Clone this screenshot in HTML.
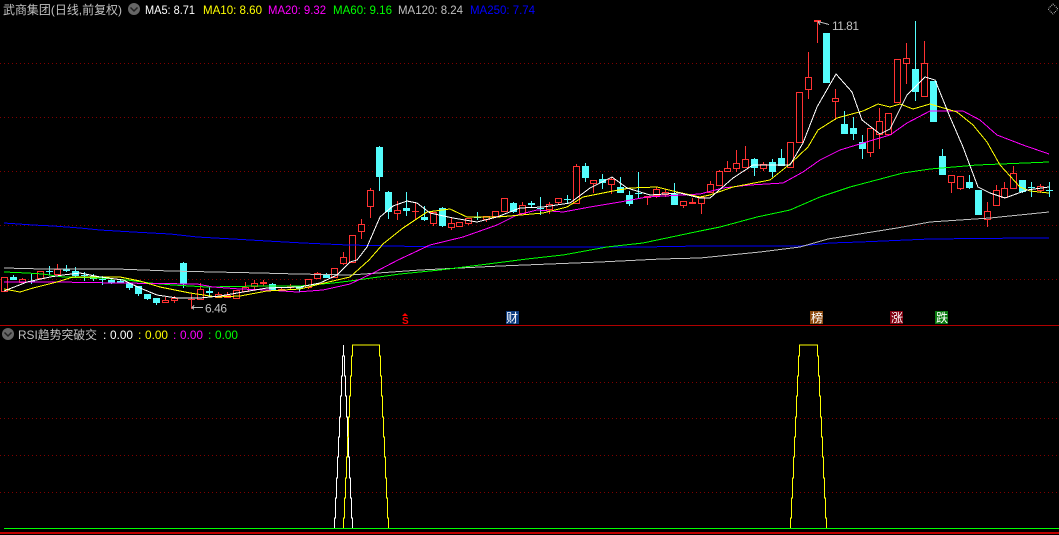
<!DOCTYPE html>
<html><head><meta charset="utf-8"><title>武商集团</title>
<style>
html,body{margin:0;padding:0;background:#000;width:1059px;height:535px;overflow:hidden}
svg{display:block;position:absolute;left:0;top:0}
text{font-family:"Liberation Sans","WenQuanYi Zen Hei","Noto Sans CJK SC",sans-serif;font-size:12px}
</style></head><body>
<svg width="1059" height="535" viewBox="0 0 1059 535" xmlns="http://www.w3.org/2000/svg">
<defs><pattern id="dots" x="0" y="0" width="4" height="1" patternUnits="userSpaceOnUse"><rect width="1" height="1" fill="#800000"/></pattern></defs>
<rect width="1059" height="535" fill="#000"/>
<g shape-rendering="crispEdges" fill="none">
<g fill="url(#dots)"><rect x="0" y="63" width="1059" height="1"/><rect x="0" y="117" width="1059" height="1"/><rect x="0" y="171" width="1059" height="1"/><rect x="0" y="225" width="1059" height="1"/><rect x="0" y="279" width="1059" height="1"/><rect x="0" y="382" width="1059" height="1"/><rect x="0" y="418" width="1059" height="1"/><rect x="0" y="455" width="1059" height="1"/><rect x="0" y="492" width="1059" height="1"/></g>
<path stroke="#b00000" d="M0 325.5H1059"/>
<rect x="0" y="532" width="1059" height="2" fill="#c00000"/>

<!-- cyan wicks -->
<path stroke="#54fcfc" d="M13.5 275V277M31.5 274V284M46 271.5h7M49.5 266V275M66.5 265V272M75.5 267V277M81 275.5h7M84.5 272V281M93.5 274V281M99 279.5h7M102.5 276V285M111.5 278V284M120.5 280V283M129.5 283V290M138.5 286V296M147.5 294V300M156.5 298V305M183.5 262V288M209.5 287V296M272.5 283V291M299.5 286V292M326.5 273V278M379.5 146V191M388.5 191V219M406.5 192V216M424.5 206V221M442.5 207V227M477.5 212V220M513.5 202V213M531.5 201V208M537 208.5h7M540.5 197V215M564 199.5h7M567.5 195V204M585.5 163V182M602.5 174V189M620.5 177V193M629.5 191V206M638.5 172V198M674.5 183V205M754.5 158V176M772.5 159V177M781.5 149V166M844.5 111V134M853.5 117V140M862.5 135V159M915.5 21V101M942.5 149V175M969.5 175V189M1022.5 180V193M1028 187.5h7M1031.5 182V197M1046 190.5h7M1049.5 182V197"/>
<!-- cyan bodies -->
<path fill="#54fcfc" d="M10 277h7v3h-7zM28 281h7v1h-7zM63 269h7v2h-7zM72 271h7v5h-7zM90 276h7v3h-7zM108 280h7v3h-7zM117 281h7v2h-7zM126 283h7v5h-7zM135 286h7v8h-7zM144 294h7v5h-7zM153 298h7v5h-7zM180 263h7v21h-7zM206 291h7v2h-7zM269 284h7v7h-7zM296 286h7v3h-7zM323 275h7v3h-7zM376 147h7v30h-7zM385 192h7v20h-7zM403 208h7v3h-7zM421 217h7v3h-7zM439 208h7v18h-7zM474 217h7v1h-7zM510 203h7v9h-7zM528 203h7v2h-7zM582 166h7v12h-7zM599 179h7v4h-7zM617 187h7v6h-7zM626 195h7v9h-7zM635 193h7v1h-7zM671 194h7v11h-7zM751 159h7v9h-7zM769 162h7v10h-7zM778 158h7v8h-7zM823 33h7v50h-7zM841 124h7v10h-7zM850 128h7v6h-7zM859 142h7v7h-7zM912 69h7v23h-7zM930 81h7v41h-7zM939 156h7v19h-7zM966 182h7v6h-7zM975 190h7v25h-7zM1019 180h7v12h-7z"/>

<!-- red wicks -->
<path stroke="#ff3232" d="M22.5 278V283M57.5 264V269M165.5 297V300M174.5 296V303M188 299.5h7M191.5 294V309M200.5 283V289M218.5 292V298M227.5 292V298M245.5 282V287M254.5 280V291M263.5 280V286M281.5 287V291M290.5 284V289M308.5 287V289M317.5 272V273M343.5 252V265M361.5 219V239M370.5 188V218M397.5 201V220M412 211.5h7M415.5 202V220M433.5 223V226M451.5 218V230M459.5 222V227M468.5 218V225M486.5 216V222M522.5 202V214M549.5 202V214M558.5 198V204M576.5 164V166M593.5 183V193M611.5 177V194M647.5 196V205M656.5 187V198M665.5 189V197M683.5 201V208M692.5 198V204M701.5 196V214M710.5 181V192M719.5 170V171M727.5 161V172M736.5 150V172M745.5 146V159M763.5 162V171M808.5 52V99M814 20.5h7M814 21.5h7M817.5 20V43M835.5 89V120M870.5 152V157M879.5 108V149M906.5 43V84M924.5 41V63M951.5 182V193M960.5 188V190M987.5 202V227M996.5 185V190M1004.5 182V198M1013.5 166V173M1040.5 184V193"/>
<!-- red bodies -->
<path stroke="#ff3232" fill="#000" d="M1.5 277.5h6v14h-6zM19.5 279.5h6v3h-6zM37.5 271.5h6v7h-6zM54.5 269.5h6v5h-6zM162.5 300.5h6v2h-6zM171.5 298.5h6v2h-6zM197.5 289.5h6v10h-6zM215.5 294.5h6v3h-6zM224.5 295.5h6v2h-6zM233.5 290.5h6v8h-6zM242.5 287.5h6v4h-6zM251.5 283.5h6v3h-6zM260.5 282.5h6v1h-6zM278.5 289.5h6v1h-6zM287.5 286.5h6v1h-6zM305.5 279.5h6v8h-6zM314.5 273.5h6v5h-6zM331.5 268.5h6v9h-6zM340.5 257.5h6v6h-6zM349.5 235.5h6v27h-6zM358.5 224.5h6v7h-6zM367.5 190.5h6v16h-6zM394.5 210.5h6v3h-6zM430.5 212.5h6v11h-6zM448.5 223.5h6v4h-6zM456.5 222.5h6v4h-6zM465.5 218.5h6v5h-6zM483.5 216.5h6v3h-6zM492.5 211.5h6v5h-6zM501.5 198.5h6v13h-6zM519.5 205.5h6v8h-6zM546.5 204.5h6v5h-6zM555.5 198.5h6v4h-6zM573.5 166.5h6v37h-6zM590.5 180.5h6v3h-6zM608.5 179.5h6v5h-6zM644.5 196.5h6v1h-6zM653.5 189.5h6v6h-6zM662.5 192.5h6v2h-6zM680.5 201.5h6v4h-6zM689.5 202.5h6v1h-6zM698.5 197.5h6v6h-6zM707.5 184.5h6v8h-6zM716.5 171.5h6v14h-6zM724.5 168.5h6v3h-6zM733.5 163.5h6v5h-6zM742.5 159.5h6v8h-6zM760.5 164.5h6v4h-6zM787.5 142.5h6v25h-6zM796.5 92.5h6v50h-6zM805.5 77.5h6v12h-6zM832.5 98.5h6v3h-6zM867.5 128.5h6v24h-6zM876.5 121.5h6v13h-6zM885.5 113.5h6v21h-6zM894.5 59.5h6v43h-6zM903.5 58.5h6v5h-6zM921.5 63.5h6v33h-6zM948.5 175.5h6v7h-6zM957.5 176.5h6v12h-6zM984.5 211.5h6v8h-6zM993.5 190.5h6v15h-6zM1001.5 188.5h6v9h-6zM1010.5 173.5h6v15h-6zM1037.5 186.5h6v4h-6z"/>

<!-- MA250 -->
<polyline stroke="#0000ff" points="4,223 33,225 53,226 80,228 100,230 133,232 170,234 197,237 233,239 267,241 303,243 348,245 438,247 607,247 643,247 700,246 800,246 830,243 860,242 930,239 1027,238 1049,238"/>
<!-- MA120 -->
<polyline stroke="#c0c0c0" points="4,268 43,269 117,269 170,271 260,273 297,274 350,275 420,270 500,266 600,262 661,259 700,258 760,252 800,247 828,239 897,228 930,222 990,218 1049,212"/>
<!-- MA60 -->
<polyline stroke="#00ff00" points="4,272 27,273 43,274 63,277 100,278 127,280 150,283 173,285 207,287 260,286 300,286 333,283 350,281 400,274 440,270 480,265 527,259 563,255 607,247 643,243 700,231 720,227 757,217 790,210 820,197 850,187 903,173 930,169 977,165 1049,162"/>
<!-- MA20 -->
<polyline stroke="#ff00ff" points="4,282 57,282 117,283 197,284 213,287 240,289 267,290 297,292 323,290 350,284 375,272 398,260 430,245 463,237 497,225 517,215 537,210 563,212 590,207 620,202 647,197 700,194 723,188 750,185 783,183 803,172 820,160 840,150 863,143 890,135 907,123 930,111 963,111 980,120 997,135 1023,145 1049,154"/>
<!-- MA10 -->
<polyline stroke="#ffff00" points="4,289 20,292 33,288 57,282 73,277 120,277 140,281 160,287 190,293 217,297 240,296 267,291 300,289 320,284 350,277 369,260 383,244 403,228 427,212 450,209 467,217 497,217 510,216 543,213 567,207 583,197 613,191 630,188 657,187 677,192 700,197 710,195 733,187 770,180 790,164 808,147 818,130 837,118 863,111 878,104 890,107 900,104 913,109 930,104 957,112 973,125 987,142 1000,165 1020,187 1030,191 1049,193"/>
<!-- MA5 -->
<polyline stroke="#ffffff" points="4,291 27,282 50,277 63,275 80,273 100,277 123,280 140,288 157,295 177,298 200,298 220,296 243,292 267,288 300,287 320,283 337,275 350,262 357,260 367,247 380,217 393,206 407,201 417,203 430,213 453,218 477,222 497,217 520,208 543,207 570,203 590,188 612,177 627,188 650,195 680,193 700,198 710,198 733,178 753,165 790,165 803,143 817,107 836,74 852,92 862,120 880,134 890,129 907,95 925,77 935,80 950,117 963,147 978,187 990,193 1005,198 1027,190 1049,187"/>

<!-- lower panel -->
<path stroke="#ffffff" d="M334.5 528V518H335.5V498H336.5V478H337.5V457H338.5V437H339.5V417H340.5V396H341.5V376H342.5V356H343.5V345V356H344.5V376H345.5V396H346.5V417H347.5V437H348.5V457H349.5V478H350.5V498H351.5V518H352.5V528"/>
<path stroke="#ffff00" d="M343.5 528V518H344.5V498H345.5V478H346.5V457H347.5V437H348.5V417H349.5V396H350.5V376H351.5V356H352.5V345H379.5V356H380.5V376H381.5V396H382.5V417H383.5V437H384.5V457H385.5V478H386.5V498H387.5V518H388.5V528"/>
<path stroke="#ffff00" d="M790.5 528V518H791.5V498H792.5V478H793.5V457H794.5V437H795.5V417H796.5V396H797.5V376H798.5V356H799.5V345H817.5V356H818.5V376H819.5V396H820.5V417H821.5V437H822.5V457H823.5V478H824.5V498H825.5V518H826.5V528"/>
<rect x="4" y="528" width="1055" height="1" fill="#00ff00"/>

<!-- annotations -->
<path stroke="#c0c0c0" d="M192 307.500H203M194 305.500L192 307.500L194 309.500M818 21.500L829 24.500M818 21.500L820 25"/>
<path stroke="#a0a0a0" stroke-dasharray="1 1" d="M1053 4L1058 9L1053 14L1048 9Z"/>
</g>

<!-- header -->
<circle cx="134" cy="9" r="6" fill="#666"/>
<path d="M130.500 7.500L134 11L137.500 7.500" fill="none" stroke="#222" stroke-width="1.500"/>
<circle cx="8" cy="334" r="6" fill="#666"/>
<path d="M4.500 332.500L8 336L11.500 332.500" fill="none" stroke="#222" stroke-width="1.500"/>

<text x="3" y="14" fill="#c0c0c0" textLength="119" lengthAdjust="spacingAndGlyphs">武商集团(日线,前复权)</text>
<text x="145" y="14" fill="#ffffff" textLength="50" lengthAdjust="spacingAndGlyphs">MA5: 8.71</text>
<text x="203" y="14" fill="#ffff00" textLength="59" lengthAdjust="spacingAndGlyphs">MA10: 8.60</text>
<text x="268" y="14" fill="#ff00ff" textLength="58" lengthAdjust="spacingAndGlyphs">MA20: 9.32</text>
<text x="333" y="14" fill="#00ff00" textLength="59" lengthAdjust="spacingAndGlyphs">MA60: 9.16</text>
<text x="398" y="14" fill="#c0c0c0" textLength="65" lengthAdjust="spacingAndGlyphs">MA120: 8.24</text>
<text x="470" y="14" fill="#0000ff" textLength="65" lengthAdjust="spacingAndGlyphs">MA250: 7.74</text>

<text x="18" y="339" fill="#c0c0c0" textLength="79" lengthAdjust="spacingAndGlyphs">RSI趋势突破交</text>
<text x="103" y="339" fill="#ffffff">:</text><text x="110" y="339" fill="#ffffff" textLength="23" lengthAdjust="spacingAndGlyphs">0.00</text>
<text x="138" y="339" fill="#ffff00">:</text><text x="145" y="339" fill="#ffff00" textLength="23" lengthAdjust="spacingAndGlyphs">0.00</text>
<text x="173" y="339" fill="#ff00ff">:</text><text x="180" y="339" fill="#ff00ff" textLength="23" lengthAdjust="spacingAndGlyphs">0.00</text>
<text x="208" y="339" fill="#00ff00">:</text><text x="215" y="339" fill="#00ff00" textLength="23" lengthAdjust="spacingAndGlyphs">0.00</text>

<text x="205" y="312.500" fill="#c0c0c0" textLength="22" lengthAdjust="spacing">6.46</text>
<text x="832" y="30" fill="#c0c0c0" textLength="27" lengthAdjust="spacing">11.81</text>

<!-- signals -->
<path d="M405 313l3 3h-6z" fill="#ff0000"/>
<text x="402" y="324" fill="#ff0000" font-weight="bold" style="font-size:10px">S</text>
<rect x="506" y="311" width="13" height="13" fill="#0c3c80"/>
<text x="506" y="322" fill="#ffffff">财</text>
<rect x="810" y="311" width="13" height="13" fill="#8c4a10"/>
<text x="811" y="322" fill="#ffffff">榜</text>
<rect x="890" y="311" width="13" height="13" fill="#800010"/>
<text x="891" y="322" fill="#ffffff">涨</text>
<rect x="935" y="311" width="13" height="13" fill="#0a7a10"/>
<text x="936" y="322" fill="#ffffff">跌</text>
</svg>
</body></html>
